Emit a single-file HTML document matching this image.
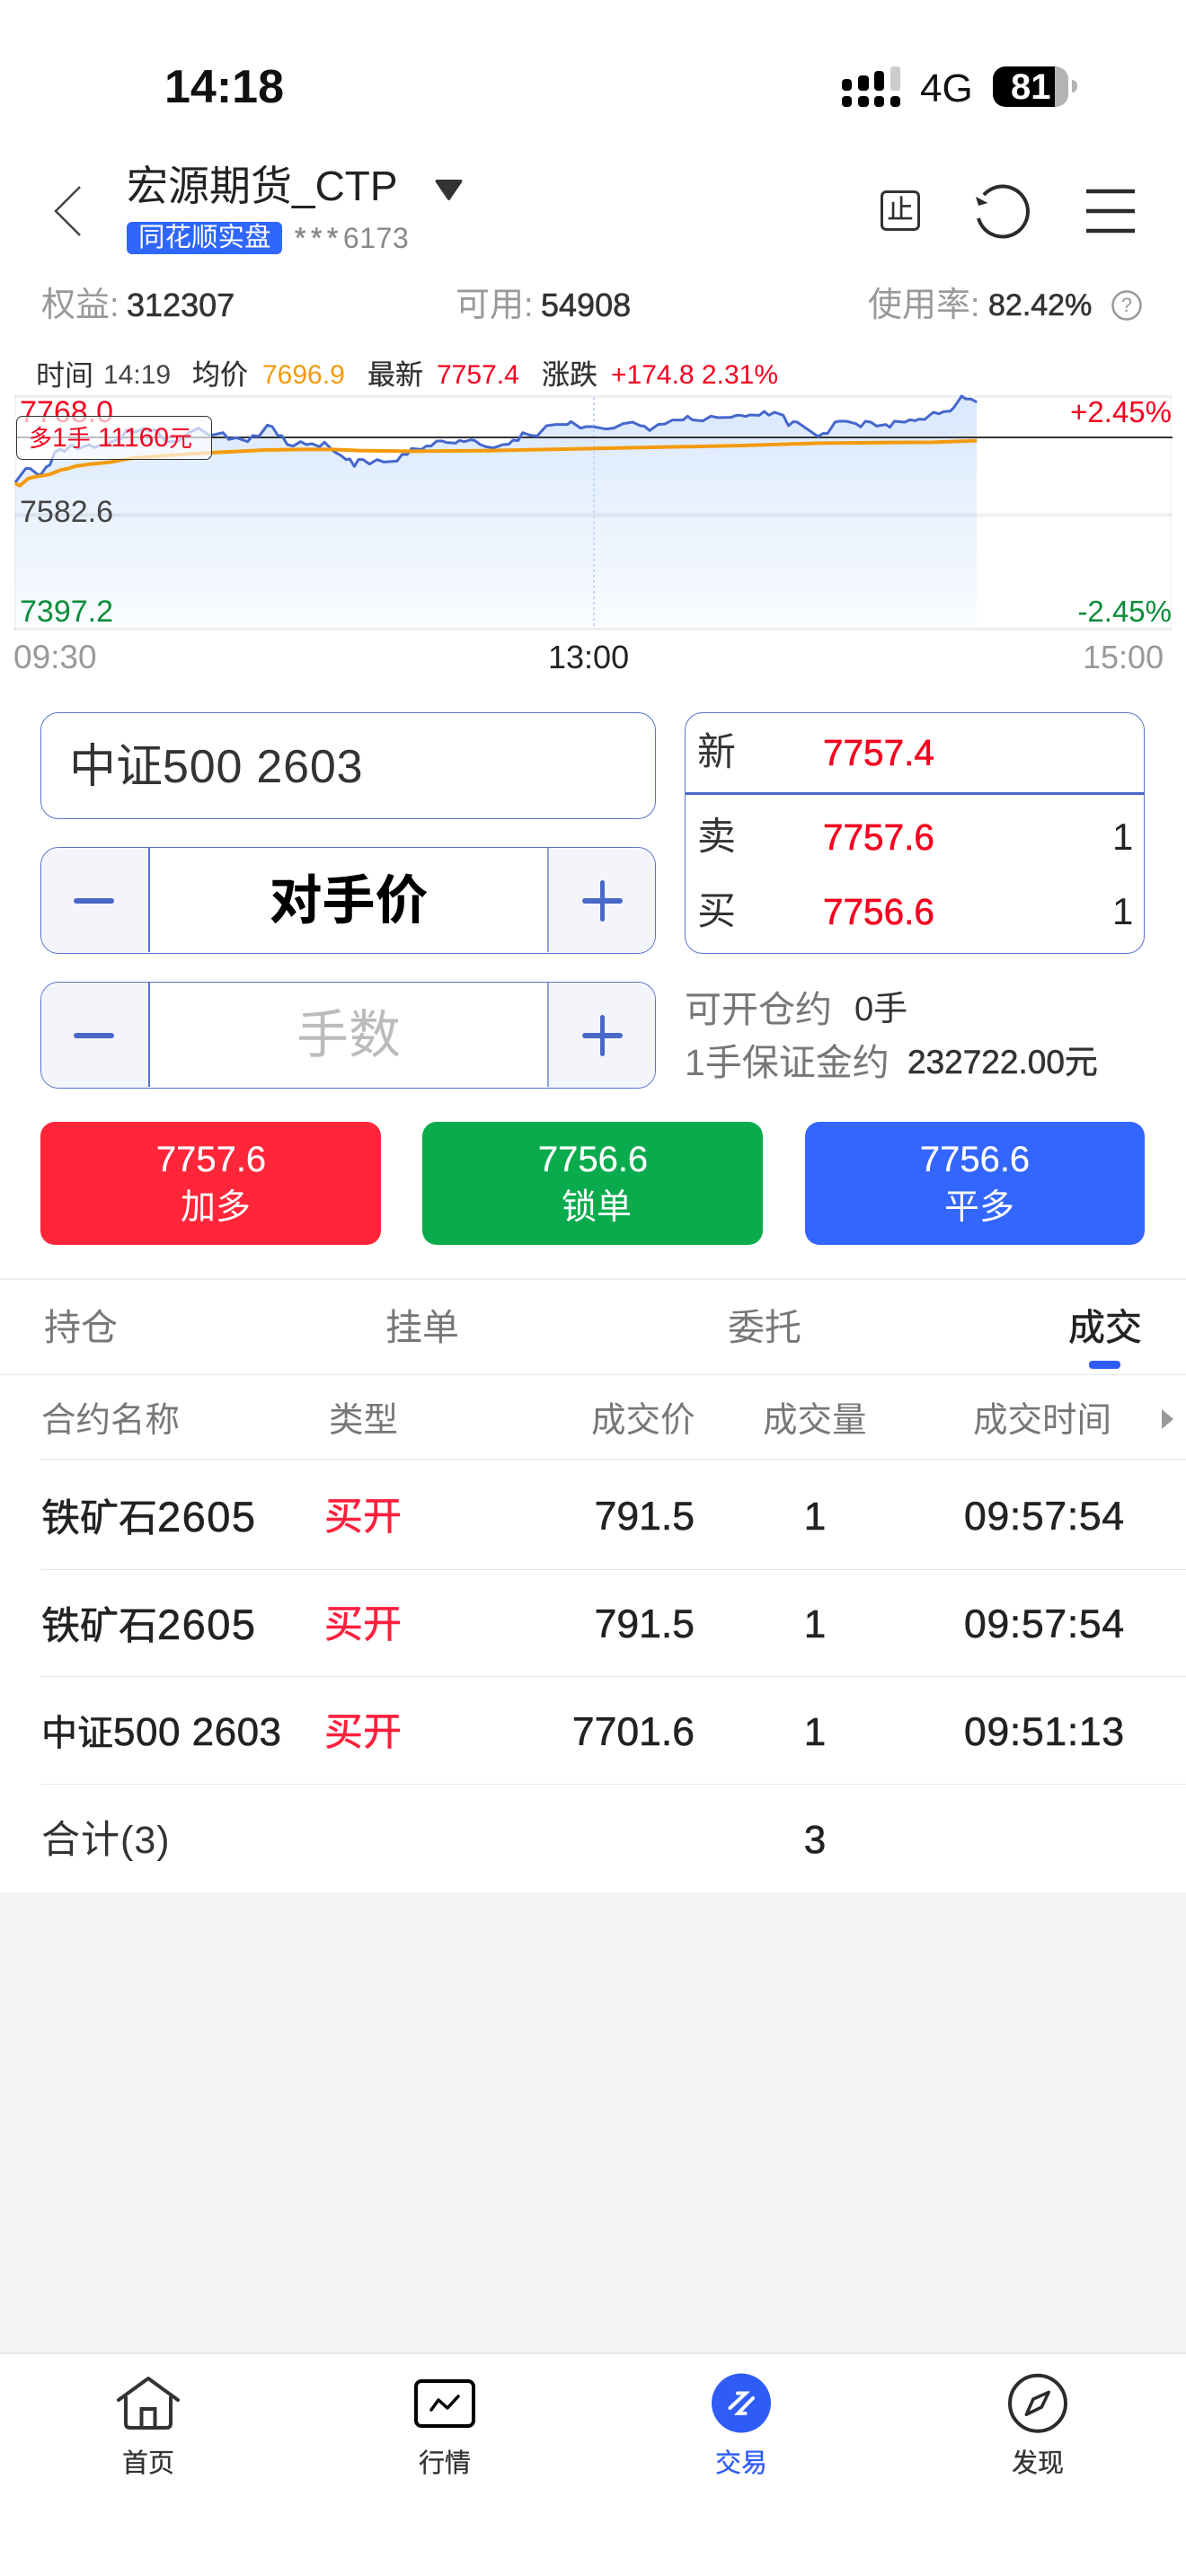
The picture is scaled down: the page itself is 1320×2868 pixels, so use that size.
<!DOCTYPE html>
<html lang="zh"><head><meta charset="utf-8"><title>交易</title>
<style>
html,body{margin:0;padding:0;background:#fff}
#p{position:relative;width:1320px;height:2868px;overflow:hidden;background:#fff;font-family:"Liberation Sans","Noto Sans CJK SC",sans-serif;color:#333}
.t{position:absolute;line-height:0;white-space:nowrap}
.c{transform:translateX(-50%)}
.m{-webkit-text-stroke:.6px currentColor}
.b{position:absolute;box-sizing:border-box}
.box{position:absolute;box-sizing:border-box;border:1.5px solid #5673cc;border-radius:20px;background:#fff;overflow:hidden}
.side{position:absolute;top:0;bottom:0;width:120px;background:#f3f5fb}
svg{position:absolute;left:0;top:0}
.gr{color:#999}
</style></head><body><div id="p">

<!-- status bar -->
<div class="t" style="left:183px;top:97px;font-size:52px;font-weight:bold;color:#111">14:18</div>
<div class="t" style="left:1024px;top:99px;font-size:44px;color:#111">4G</div>
<div class="b" style="left:1105px;top:74px;width:84px;height:45px;border-radius:14px;background:linear-gradient(90deg,#000 0,#000 82%,#b3b3b3 82%)"></div>
<div class="b" style="left:1193px;top:89px;width:6px;height:14px;border-radius:0 6px 6px 0;background:#b3b3b3"></div>
<div class="t" style="left:1125px;top:97px;font-size:40px;font-weight:bold;color:#fff">81</div>

<svg width="1320" height="2868" viewBox="0 0 1320 2868">
<defs>
<linearGradient id="f" gradientUnits="userSpaceOnUse" x1="0" y1="60" x2="0" y2="842"><stop offset="0" stop-color="#d9e8fd"/><stop offset="1" stop-color="#fafcff"/></linearGradient>
</defs>
<!-- signal -->
<g fill="#000">
<rect x="937" y="88" width="11" height="13" rx="4"/><rect x="955" y="84" width="12" height="17" rx="4"/><rect x="973" y="79" width="11" height="22" rx="4"/><rect x="991" y="74" width="11" height="27" rx="3" fill="#ccc"/>
<rect x="937" y="107" width="11" height="12" rx="4"/><rect x="955" y="107" width="12" height="12" rx="4"/><rect x="973" y="107" width="11" height="12" rx="4"/><rect x="991" y="107" width="11" height="12" rx="4"/>
</g>
<!-- header icons -->
<path d="M89 208 L62 235 L89 262" fill="none" stroke="#444" stroke-width="2.5"/>
<path d="M486 200 H513 Q515 200 514 203 L501 222 Q500 224 498 222 L485 203 Q484 200 486 200Z" fill="#333"/>
<rect x="981.5" y="213.5" width="41" height="42" rx="5" fill="none" stroke="#333" stroke-width="3"/>
<path d="M1089 243 A28 28 0 1 0 1095 217" fill="none" stroke="#2b2b2b" stroke-width="4"/>
<path d="M1086 219 L1099.500 226 L1089 229Z" fill="#2b2b2b"/>
<path d="M1209 213H1263M1209 235H1263M1209 257H1263" stroke="#2b2b2b" stroke-width="4.500"/>
<circle cx="1254" cy="340" r="15.500" fill="none" stroke="#999" stroke-width="2.500"/>

<!-- chart -->
<g transform="translate(0,420) scale(0.42088,0.33333)">
<polygon fill="url(#f)" points="40,842 40,352 68,305 80,305 100,325 108,325 122,300 132,293 145,250 160,240 170,248 190,225 205,240 235,225 250,235 262,228 280,228 295,215 320,205 335,175 350,185 365,180 380,170 395,180 410,175 440,215 470,215 500,185 525,170 555,195 590,185 605,208 625,202 655,215 668,195 685,197 707,160 720,165 735,195 745,195 760,225 775,230 795,215 810,225 825,222 845,232 858,217 885,250 900,260 915,275 925,273 937,298 948,275 960,275 977,290 997,275 1015,283 1050,280 1063,258 1077,258 1088,238 1115,241 1127,230 1140,230 1155,213 1170,213 1180,218 1205,220 1215,211 1228,215 1245,209 1255,211 1270,225 1285,232 1305,236 1330,225 1345,224 1357,210 1370,212 1382,185 1400,193 1420,197 1445,162 1470,158 1500,158 1510,148 1535,170 1550,165 1568,165 1568,842"/>
</g>
<g transform="translate(660,420) scale(0.42088,0.33333)">
<polygon fill="url(#f)" points="0,842 0,165 35,173 55,170 80,155 105,150 125,162 135,163 150,178 172,158 190,156 210,143 238,143 250,130 262,142 290,146 312,130 330,135 365,134 380,127 390,127 403,131 415,126 440,127 453,114 465,127 480,117 503,127 517,162 530,148 540,150 595,198 608,188 620,188 640,150 650,147 670,147 695,155 708,166 720,147 735,150 750,163 775,158 785,167 797,147 825,150 838,142 852,145 862,140 877,141 900,117 915,122 927,115 945,113 955,100 975,63 985,72 1000,73 1015,83 1015,842"/>
</g>
<rect x="16" y="440" width="1288" height="3" fill="#000" opacity=".06"/>
<rect x="16" y="699" width="1288" height="3" fill="#000" opacity=".06"/>
<rect x="16" y="571.500" width="1288" height="4" fill="#000" opacity=".06"/>
<rect x="16" y="440" width="2" height="262" fill="#000" opacity=".04"/>
<rect x="1302" y="440" width="2" height="262" fill="#000" opacity=".04"/>
<path d="M661 442V700" stroke="#c4d6f6" stroke-width="2" stroke-dasharray="3 3"/>
<path d="M18 487H1305" stroke="#333" stroke-width="2"/>
<g transform="translate(0,420) scale(0.42088,0.33333)" fill="none" style="stroke-linejoin:round">
<polyline vector-effect="non-scaling-stroke" stroke="#4467cc" stroke-width="3" points="40,352 68,305 80,305 100,325 108,325 122,300 132,293 145,250 160,240 170,248 190,225 205,240 235,225 250,235 262,228 280,228 295,215 320,205 335,175 350,185 365,180 380,170 395,180 410,175 440,215 470,215 500,185 525,170 555,195 590,185 605,208 625,202 655,215 668,195 685,197 707,160 720,165 735,195 745,195 760,225 775,230 795,215 810,225 825,222 845,232 858,217 885,250 900,260 915,275 925,273 937,298 948,275 960,275 977,290 997,275 1015,283 1050,280 1063,258 1077,258 1088,238 1115,241 1127,230 1140,230 1155,213 1170,213 1180,218 1205,220 1215,211 1228,215 1245,209 1255,211 1270,225 1285,232 1305,236 1330,225 1345,224 1357,210 1370,212 1382,185 1400,193 1420,197 1445,162 1470,158 1500,158 1510,148 1535,170 1550,165 1568,165"/>
<polyline vector-effect="non-scaling-stroke" stroke="#f39a0d" stroke-width="4" points="40,355 53,362 75,338 95,332 130,325 160,310 180,305 200,297 240,290 290,284 340,272 400,265 480,258 560,252 700,243 800,241 880,241 950,245 1080,247 1300,245 1420,242 1568,238"/>
</g>
<g transform="translate(660,420) scale(0.42088,0.33333)" fill="none" style="stroke-linejoin:round">
<polyline vector-effect="non-scaling-stroke" stroke="#4467cc" stroke-width="3" points="0,165 35,173 55,170 80,155 105,150 125,162 135,163 150,178 172,158 190,156 210,143 238,143 250,130 262,142 290,146 312,130 330,135 365,134 380,127 390,127 403,131 415,126 440,127 453,114 465,127 480,117 503,127 517,162 530,148 540,150 595,198 608,188 620,188 640,150 650,147 670,147 695,155 708,166 720,147 735,150 750,163 775,158 785,167 797,147 825,150 838,142 852,145 862,140 877,141 900,117 915,122 927,115 945,113 955,100 975,63 985,72 1000,73 1015,83"/>
<polyline vector-effect="non-scaling-stroke" stroke="#f39a0d" stroke-width="4" points="0,238 200,233 400,228 600,220 800,218 900,217 1015,212"/>
</g>

<!-- tab bar icons -->
<path d="M132 2672 L165 2648 L198 2672" fill="none" stroke="#333" stroke-width="4" stroke-linecap="round" stroke-linejoin="round"/>
<path d="M140 2668 V2698 Q140 2703 145 2703 H185 Q190 2703 190 2698 V2668" fill="none" stroke="#333" stroke-width="4"/>
<path d="M157.500 2703 V2682 H172.500 V2703" fill="none" stroke="#333" stroke-width="4"/>
<rect x="463" y="2651" width="64" height="50" rx="6" fill="none" stroke="#000" stroke-width="4"/>
<path d="M480 2683 L488 2672 L498 2681 L510 2668" fill="none" stroke="#000" stroke-width="3.500" stroke-linecap="round" stroke-linejoin="round"/>
<circle cx="825" cy="2675.500" r="33" fill="#2f5cf7"/>
<path d="M821 2664.500 H830 L812.500 2681 M838 2670 L821.500 2687 H829.500" fill="none" stroke="#fff" stroke-width="4" stroke-linecap="round" stroke-linejoin="miter"/>
<circle cx="1155" cy="2675.700" r="31" fill="none" stroke="#2b2b2b" stroke-width="4"/>
<path d="M1167.300 2663.300 L1159.300 2680 L1142.300 2688.300 L1150 2671Z" fill="#fff" stroke="#2b2b2b" stroke-width="3.500" stroke-linejoin="round"/>
</svg>

<!-- header text -->
<div class="t" style="left:141px;top:207px;font-size:46px;color:#222">宏源期货_CTP</div>
<div class="b" style="left:141px;top:247px;width:173px;height:36px;border-radius:6px;background:#2f66fb"></div>
<div class="t" style="left:154px;top:265px;font-size:29.500px;color:#fff">同花顺实盘</div>
<div class="t" style="left:328px;top:265px;font-size:32px;color:#888"><span style="letter-spacing:5.500px;-webkit-text-stroke:.5px #888">***</span><span style="letter-spacing:.6px">6173</span></div>
<div class="t c m" style="left:1002px;top:234px;font-size:29px;color:#333;-webkit-text-stroke-width:.4px">止</div>

<!-- account row -->
<div class="t gr" style="left:46px;top:340px;font-size:38px">权益:</div>
<div class="t m" style="left:141px;top:340px;font-size:36px;color:#333">312307</div>
<div class="t gr" style="left:507px;top:340px;font-size:38px">可用:</div>
<div class="t m" style="left:602px;top:340px;font-size:36px;color:#333">54908</div>
<div class="t gr" style="left:966px;top:340px;font-size:38px">使用率:</div>
<div class="t m" style="left:1100px;top:340px;font-size:34px;color:#333">82.42%</div>
<div class="t c gr" style="left:1254px;top:340px;font-size:22px">?</div>

<!-- chart head -->
<div class="t" style="left:40px;top:418px;font-size:32px;color:#333">时间</div>
<div class="t" style="left:115px;top:418px;font-size:30px;color:#444">14:19</div>
<div class="t m" style="left:214px;top:418px;font-size:31px;color:#333;-webkit-text-stroke-width:.3px">均价</div>
<div class="t" style="left:292px;top:418px;font-size:30px;color:#f29a0d">7696.9</div>
<div class="t m" style="left:409px;top:418px;font-size:31px;color:#333;-webkit-text-stroke-width:.3px">最新</div>
<div class="t" style="left:486px;top:418px;font-size:30px;color:#f5001f">7757.4</div>
<div class="t m" style="left:603px;top:418px;font-size:31px;color:#333;-webkit-text-stroke-width:.3px">涨跌</div>
<div class="t" style="left:680px;top:418px;font-size:30px;color:#f5001f">+174.8 2.31%</div>

<!-- chart labels -->
<div class="t" style="left:22px;top:459px;font-size:34px;color:#f5001f">7768.0</div>
<div class="t" style="left:22px;top:570px;font-size:34px;color:#444">7582.6</div>
<div class="t" style="left:22px;top:681px;font-size:34px;color:#0b8c3a">7397.2</div>
<div class="t" style="right:16px;top:459px;font-size:33px;color:#f5001f">+2.45%</div>
<div class="t" style="right:16px;top:681px;font-size:33px;color:#0b8c3a">-2.45%</div>
<div class="b" style="left:18px;top:463px;width:218px;height:49px;border:1.500px solid #333;border-radius:7px;background:rgba(255,255,255,.68)"></div>
<div class="t" style="left:32px;top:488px;font-size:26px;color:#f5001f">多<span style="font-size:30px">1</span>手<span style="font-size:30px"> 11160</span>元</div>
<div class="t gr" style="left:15px;top:732px;font-size:37px">09:30</div>
<div class="t" style="left:610px;top:732px;font-size:36px;color:#222">13:00</div>
<div class="t gr" style="left:1205px;top:732px;font-size:36px">15:00</div>

<!-- form -->
<div class="box" style="left:45px;top:793px;width:685px;height:119px"></div>
<div class="t" style="left:77px;top:854px;font-size:52px;color:#333">中证<span style="letter-spacing:.8px">500 2603</span></div>

<div class="box" style="left:45px;top:943px;width:685px;height:119px">
 <div class="side" style="left:0"></div><div class="side" style="right:0"></div>
 <div class="b" style="left:119px;top:0;width:1.5px;height:116px;background:#5673cc"></div>
 <div class="b" style="left:563px;top:0;width:1.5px;height:116px;background:#8fa2dc"></div>
</div>
<div class="b" style="left:82px;top:1000px;width:45px;height:6px;border-radius:3px;background:#4a68c9"></div>
<div class="b" style="left:648px;top:1000px;width:45px;height:6px;border-radius:3px;background:#4a68c9"></div>
<div class="b" style="left:668px;top:980px;width:5px;height:46px;border-radius:3px;background:#4a68c9"></div>
<div class="t c" style="left:388px;top:1003px;font-size:59px;font-weight:bold;color:#000">对手价</div>

<div class="box" style="left:45px;top:1093px;width:685px;height:119px">
 <div class="side" style="left:0"></div><div class="side" style="right:0"></div>
 <div class="b" style="left:119px;top:0;width:1.5px;height:116px;background:#5673cc"></div>
 <div class="b" style="left:563px;top:0;width:1.5px;height:116px;background:#8fa2dc"></div>
</div>
<div class="b" style="left:82px;top:1150px;width:45px;height:6px;border-radius:3px;background:#4a68c9"></div>
<div class="b" style="left:648px;top:1150px;width:45px;height:6px;border-radius:3px;background:#4a68c9"></div>
<div class="b" style="left:668px;top:1130px;width:5px;height:46px;border-radius:3px;background:#4a68c9"></div>
<div class="t c" style="left:388px;top:1153px;font-size:58px;color:#bbb">手数</div>

<div class="box" style="left:762px;top:793px;width:512px;height:269px">
 <div class="b" style="left:0;top:88px;width:510px;height:2.5px;background:#4a68c9"></div>
</div>
<div class="t" style="left:776px;top:838px;font-size:43px;color:#333">新</div>
<div class="t m" style="left:916px;top:838px;font-size:40.500px;color:#f5001f">7757.4</div>
<div class="t" style="left:776px;top:932px;font-size:43px;color:#333">卖</div>
<div class="t m" style="left:916px;top:932px;font-size:40.500px;color:#f5001f">7757.6</div>
<div class="t" style="left:1238px;top:932px;font-size:42px;color:#222">1</div>
<div class="t" style="left:776px;top:1015px;font-size:43px;color:#333">买</div>
<div class="t m" style="left:916px;top:1015px;font-size:40.500px;color:#f5001f">7756.6</div>
<div class="t" style="left:1238px;top:1015px;font-size:42px;color:#222">1</div>

<div class="t" style="left:762px;top:1124px;font-size:41px;color:#777">可开仓约</div>
<div class="t" style="left:951px;top:1124px;font-size:38px;color:#333">0手</div>
<div class="t" style="left:762px;top:1183px;font-size:41px;color:#777">1手保证金约</div>
<div class="t m" style="left:1010px;top:1183px;font-size:37px;color:#333">232722.00元</div>

<!-- buttons -->
<div class="b" style="left:45px;top:1249px;width:379px;height:137px;border-radius:16px;background:#ff2639"></div>
<div class="b" style="left:470px;top:1249px;width:379px;height:137px;border-radius:16px;background:#09ab4d"></div>
<div class="b" style="left:896px;top:1249px;width:378px;height:137px;border-radius:16px;background:#3366ff"></div>
<div class="t c" style="left:235px;top:1291px;font-size:40px;color:#fff;-webkit-text-stroke:.3px #fff">7757.6</div>
<div class="t c" style="left:240px;top:1345px;font-size:39px;color:#fff">加多</div>
<div class="t c" style="left:660px;top:1291px;font-size:40px;color:#fff;-webkit-text-stroke:.3px #fff">7756.6</div>
<div class="t c" style="left:664px;top:1345px;font-size:39px;color:#fff">锁单</div>
<div class="t c" style="left:1085px;top:1291px;font-size:40px;color:#fff;-webkit-text-stroke:.3px #fff">7756.6</div>
<div class="t c" style="left:1090px;top:1345px;font-size:39px;color:#fff">平多</div>

<!-- tabs -->
<div class="b" style="left:0;top:1423px;width:1320px;height:2px;background:#eee"></div>
<div class="t" style="left:49px;top:1478px;font-size:41px;color:#777">持仓</div>
<div class="t" style="left:429px;top:1478px;font-size:41px;color:#777">挂单</div>
<div class="t" style="left:810px;top:1478px;font-size:41px;color:#777">委托</div>
<div class="t m" style="left:1189px;top:1478px;font-size:41px;color:#222">成交</div>
<div class="b" style="left:1212px;top:1515px;width:35px;height:9px;border-radius:4px;background:#2f5cf7"></div>
<div class="b" style="left:0;top:1530px;width:1320px;height:1px;background:#e8e8e8"></div>

<!-- table header -->
<div class="t" style="left:46px;top:1582px;font-size:38.500px;color:#777">合约名称</div>
<div class="t" style="left:366px;top:1582px;font-size:38.500px;color:#777">类型</div>
<div class="t" style="left:658px;top:1582px;font-size:38.500px;color:#777">成交价</div>
<div class="t" style="left:849px;top:1582px;font-size:38.500px;color:#777">成交量</div>
<div class="t" style="left:1083px;top:1582px;font-size:38.500px;color:#777">成交时间</div>
<div class="b" style="left:1293px;top:1569px;width:0;height:0;border-left:13px solid #999;border-top:11px solid transparent;border-bottom:11px solid transparent"></div>
<div class="b" style="left:45px;top:1624px;width:1275px;height:2px;background:#eee"></div>

<!-- rows -->
<div class="t m" style="left:46px;top:1689px;font-size:43px;color:#222">铁矿石<span style="font-size:47px;letter-spacing:1.500px">2605</span></div>
<div class="t m" style="left:361px;top:1689px;font-size:43px;color:#ff1f3d">买开</div>
<div class="t m" style="right:547px;top:1689px;font-size:44.500px;color:#222">791.5</div>
<div class="t c m" style="left:907px;top:1689px;font-size:44px;color:#222">1</div>
<div class="t m" style="left:1073px;top:1689px;font-size:44.500px;letter-spacing:.7px;color:#222">09:57:54</div>
<div class="b" style="left:45px;top:1747px;width:1275px;height:1px;background:#e8e8e8"></div>

<div class="t m" style="left:46px;top:1809px;font-size:43px;color:#222">铁矿石<span style="font-size:47px;letter-spacing:1.500px">2605</span></div>
<div class="t m" style="left:361px;top:1809px;font-size:43px;color:#ff1f3d">买开</div>
<div class="t m" style="right:547px;top:1809px;font-size:44.500px;color:#222">791.5</div>
<div class="t c m" style="left:907px;top:1809px;font-size:44px;color:#222">1</div>
<div class="t m" style="left:1073px;top:1809px;font-size:44.500px;letter-spacing:.7px;color:#222">09:57:54</div>
<div class="b" style="left:45px;top:1866px;width:1275px;height:1px;background:#e8e8e8"></div>

<div class="t m" style="left:46px;top:1929px;font-size:40px;color:#222">中证<span style="font-size:44px;letter-spacing:.5px">500 2603</span></div>
<div class="t m" style="left:361px;top:1929px;font-size:43px;color:#ff1f3d">买开</div>
<div class="t m" style="right:547px;top:1929px;font-size:44.500px;color:#222">7701.6</div>
<div class="t c m" style="left:907px;top:1929px;font-size:44px;color:#222">1</div>
<div class="t m" style="left:1073px;top:1929px;font-size:44.500px;letter-spacing:.7px;color:#222">09:51:13</div>
<div class="b" style="left:45px;top:1986px;width:1275px;height:1px;background:#e8e8e8"></div>

<div class="t" style="left:46px;top:2049px;font-size:43px;letter-spacing:1px;color:#333">合计(3)</div>
<div class="t c m" style="left:907px;top:2049px;font-size:44px;color:#222">3</div>

<!-- grey area -->
<div class="b" style="left:0;top:2107px;width:1320px;height:512px;background:#f4f4f4"></div>
<div class="b" style="left:0;top:2619px;width:1320px;height:2px;background:#e9e9e9"></div>

<!-- tab labels -->
<div class="t c m" style="left:165px;top:2743px;font-size:29px;color:#333;-webkit-text-stroke-width:.3px">首页</div>
<div class="t c m" style="left:495px;top:2743px;font-size:29px;color:#333;-webkit-text-stroke-width:.3px">行情</div>
<div class="t c m" style="left:825px;top:2743px;font-size:29px;color:#2f5cf7;-webkit-text-stroke-width:.3px">交易</div>
<div class="t c m" style="left:1155px;top:2743px;font-size:29px;color:#333;-webkit-text-stroke-width:.3px">发现</div>

</div></body></html>
